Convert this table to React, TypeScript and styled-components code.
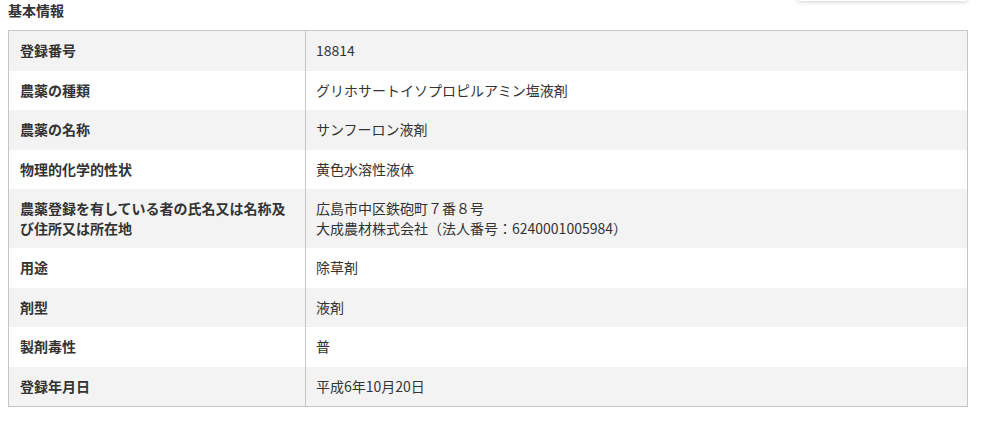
import styled, { createGlobalStyle } from "styled-components";

const GlobalStyle = createGlobalStyle`
  html, body {
    margin: 0;
    padding: 0;
    background: #fff;
  }
  body {
    font-family: "Noto Sans CJK JP", "Noto Sans", sans-serif;
    color: #333;
  }
`;

const Wrapper = styled.div`
  position: relative;
  width: 960px;
  padding: 0 14px 0 8px;
`;

const FloatBox = styled.div`
  position: absolute;
  top: -40px;
  left: 797px;
  width: 171px;
  height: 41px;
  background: #fff;
  border-radius: 3px;
  box-shadow: 0 1px 4px rgba(0, 0, 0, 0.18);
`;

const Heading = styled.h3`
  margin: 0;
  padding-top: 1px;
  height: 29px;
  font-size: 14px;
  font-weight: bold;
  line-height: 18px;
  color: #333;
`;

const Table = styled.table`
  width: 960px;
  border-collapse: collapse;
  border: 1px solid #c6c6c6;
  font-size: 14px;
  line-height: 19.5px;
`;

const Row = styled.tr<{ $shaded: boolean }>`
  background: ${(p) => (p.$shaded ? "#f3f3f3" : "#fff")};
`;

const Label = styled.th`
  width: 297px;
  box-sizing: border-box;
  padding: 10px 11px;
  text-align: left;
  vertical-align: top;
  font-weight: bold;
  color: #333;
  border-right: 1px solid #c6c6c6;
`;

const Value = styled.td`
  padding: 10px 10px;
  vertical-align: top;
  color: #333;
`;

interface Item {
  label: string;
  value: string[];
}

const items: Item[] = [
  { label: "登録番号", value: ["18814"] },
  { label: "農薬の種類", value: ["グリホサートイソプロピルアミン塩液剤"] },
  { label: "農薬の名称", value: ["サンフーロン液剤"] },
  { label: "物理的化学的性状", value: ["黄色水溶性液体"] },
  {
    label: "農薬登録を有している者の氏名又は名称及び住所又は所在地",
    value: ["広島市中区鉄砲町７番８号", "大成農材株式会社（法人番号：6240001005984）"],
  },
  { label: "用途", value: ["除草剤"] },
  { label: "剤型", value: ["液剤"] },
  { label: "製剤毒性", value: ["普"] },
  { label: "登録年月日", value: ["平成6年10月20日"] },
];

const App = () => {
  return (
    <>
      <GlobalStyle />
      <Wrapper>
        <FloatBox />
        <Heading>基本情報</Heading>
        <Table>
          <tbody>
            {items.map((item, i) => (
              <Row key={item.label} $shaded={i % 2 === 0}>
                <Label>{item.label}</Label>
                <Value>
                  {item.value.map((line, j) => (
                    <div key={j}>{line}</div>
                  ))}
                </Value>
              </Row>
            ))}
          </tbody>
        </Table>
      </Wrapper>
    </>
  );
};

export default App;
